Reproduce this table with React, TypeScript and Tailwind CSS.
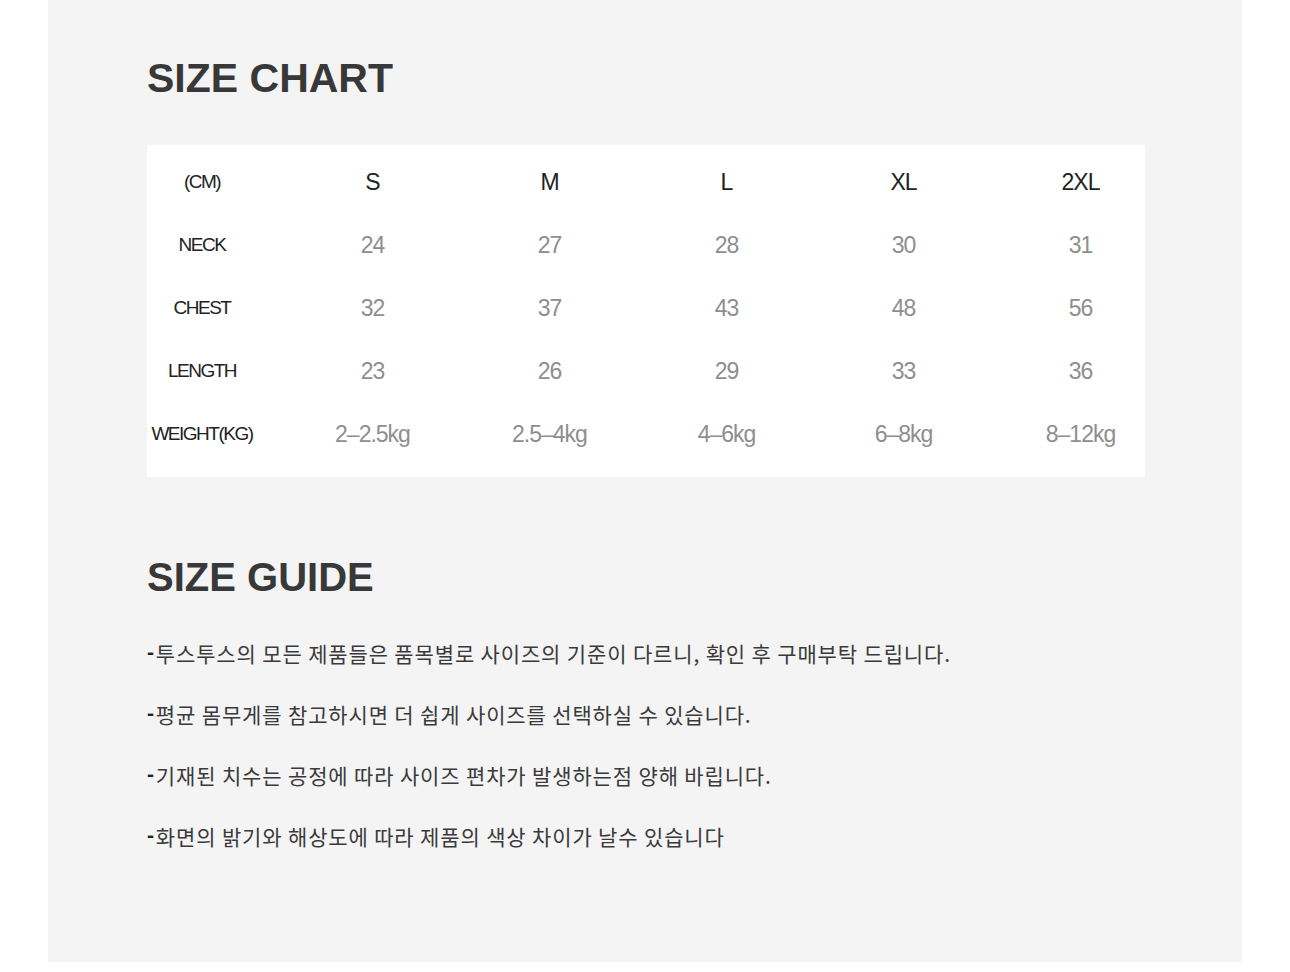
const sizes = ["S", "M", "L", "XL", "2XL"];

const rows: { label: string; values: string[] }[] = [
  { label: "NECK", values: ["24", "27", "28", "30", "31"] },
  { label: "CHEST", values: ["32", "37", "43", "48", "56"] },
  { label: "LENGTH", values: ["23", "26", "29", "33", "36"] },
  { label: "WEIGHT(KG)", values: ["2–2.5kg", "2.5–4kg", "4–6kg", "6–8kg", "8–12kg"] },
];

const guide = [
  "투스투스의 모든 제품들은 품목별로 사이즈의 기준이 다르니, 확인 후 구매부탁 드립니다.",
  "평균 몸무게를 참고하시면 더 쉽게 사이즈를 선택하실 수 있습니다.",
  "기재된 치수는 공정에 따라 사이즈 편차가 발생하는점 양해 바립니다.",
  "화면의 밝기와 해상도에 따라 제품의 색상 차이가 날수 있습니다",
];

const latin = "font-['Liberation_Sans',Arial,sans-serif]";
const cols = "grid grid-cols-[137px_177px_177px_177px_177px_153px] h-[63px] items-center";

function Row({ label, values, head }: { label: string; values: string[]; head?: boolean }) {
  return (
    <div className={cols}>
      <div className="w-[110px] text-center text-[19px] tracking-[-1.5px] text-[#222]">{label}</div>
      {values.map((v, i) => (
        <div
          key={v + i}
          className={`text-center text-[23px] tracking-[-1px] ${i === 4 ? "pl-[24px]" : ""} ${
            head ? "text-[#222]" : "text-[#8e8e8e]"
          }`}
        >
          {v}
        </div>
      ))}
    </div>
  );
}

export default function App() {
  return (
    <div className="min-h-[972px] bg-white">
      <div className={`ml-[48px] w-[1194px] h-[962px] bg-[#f4f4f4] pl-[99px] pt-[58px] ${latin}`}>
        <h2 className="text-[41px] leading-none font-bold text-[#383838]">SIZE CHART</h2>

        <div className="mt-[46px] w-[998px] h-[332px] bg-white flex flex-col pt-[6px]">
          <Row label="(CM)" values={sizes} head />
          {rows.map((r) => (
            <Row key={r.label} label={r.label} values={r.values} />
          ))}
        </div>

        <h2 className="mt-[80px] text-[40px] leading-none font-bold text-[#383838]">SIZE GUIDE</h2>

        <ul className="mt-[26px] font-['Noto_Sans_CJK_KR','Noto_Sans',sans-serif] text-[21px] text-[#3a3a3a]">
          {guide.map((g) => (
            <li key={g} className="h-[61px] leading-[61px] tracking-[0.85px]">
              <span className={`relative -top-[3px] mr-[1px] font-bold text-[#222] ${latin}`}>-</span>
              {g}
            </li>
          ))}
        </ul>
      </div>
    </div>
  );
}
